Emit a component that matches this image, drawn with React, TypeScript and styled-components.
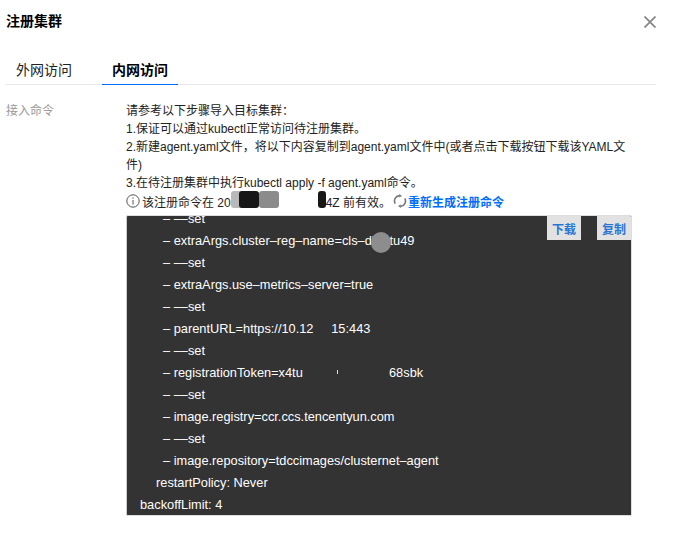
import { createGlobalStyle } from "styled-components";
import styled from "styled-components";

const GlobalStyle = createGlobalStyle`
	html, body {
		margin: 0;
		background: #fff;
		font-family: "Liberation Sans", "Noto Sans CJK SC", sans-serif;
		font-size: 12px;
		color: #222;
	}
`;

const codeLines = [
	{ indent: 36, text: "– ––set" },
	{ indent: 36, text: "– extraArgs.cluster–reg–name=cls–db   tu49" },
	{ indent: 36, text: "– ––set" },
	{ indent: 36, text: "– extraArgs.use–metrics–server=true" },
	{ indent: 36, text: "– ––set" },
	{ indent: 36, text: "– parentURL=https://10.12     15:443" },
	{ indent: 36, text: "– ––set" },
	{ indent: 36, text: "– registrationToken=x4tu" },
	{ indent: 36, text: "– ––set" },
	{ indent: 36, text: "– image.registry=ccr.ccs.tencentyun.com" },
	{ indent: 36, text: "– ––set" },
	{ indent: 36, text: "– image.repository=tdccimages/clusternet–agent" },
	{ indent: 29, text: "restartPolicy: Never" },
	{ indent: 13, text: "backoffLimit: 4" },
];

export default function App() {
	return (
		<Dialog>
			<GlobalStyle />
			<Header>
				<Title>注册集群</Title>
				<CloseIcon viewBox="0 0 12 12">
					<path d="M0.5 0.5 L11.5 11.5 M11.5 0.5 L0.5 11.5" />
				</CloseIcon>
			</Header>
			<Tabs>
				<Tab>外网访问</Tab>
				<Tab $active>内网访问</Tab>
			</Tabs>
			<Row>
				<FieldLabel>接入命令</FieldLabel>
				<Field>
					<Steps>
						<p>请参考以下步骤导入目标集群：</p>
						<p>1.保证可以通过kubectl正常访问待注册集群。</p>
						<p>2.新建agent.yaml文件，将以下内容复制到agent.yaml文件中(或者点击下载按钮下载该YAML文件)</p>
						<p>3.在待注册集群中执行kubectl apply -f agent.yaml命令。</p>
					</Steps>
					<Expiry>
						<InfoIcon viewBox="0 0 14 14">
							<circle cx="7" cy="7" r="6.2" />
							<path d="M7 6 V10.5 M7 3.4 V4.8" />
						</InfoIcon>
						<span>该注册命令在 20</span>
						<Masked>
							<Blob $w={12} $x={0} $c="#b9b9b9" />
							<Blob $w={20} $x={8} $c="#171717" />
							<Blob $w={20} $x={28} $c="#8b8b8b" />
							<Blob $w={8} $x={87} $c="#171717" />
						</Masked>
						<span>4Z 前有效。</span>
						<RefreshIcon viewBox="0 0 14 14">
							<path d="M11.8 4.4 A5.4 5.4 0 0 1 7.6 12.4" />
							<path d="M2.2 9.6 A5.4 5.4 0 0 1 6.4 1.6" />
							<path className="head" d="M6.2 0 L9 2 L6.2 3.6 Z M7.8 14 L5 12 L7.8 10.4 Z" />
						</RefreshIcon>
						<LinkText>重新生成注册命令</LinkText>
					</Expiry>
					<CodeBox>
						<CodeScroll>
							{codeLines.map((line, i) => (
								<CodeLine key={i} $indent={line.indent}>
									{line.text}
								</CodeLine>
							))}
						</CodeScroll>
						<TokenEnd>68sbk</TokenEnd>
						<TokenMark />
						<NameBlob />
						<CodeAction $right={50}>下载</CodeAction>
						<CodeAction $right={0}>复制</CodeAction>
					</CodeBox>
				</Field>
			</Row>
		</Dialog>
	);
}

const Dialog = styled.div`
	width: 679px;
	height: 545px;
	padding: 10px 23px 0 6px;
	box-sizing: border-box;
	overflow: hidden;
	background: #fff;
`;

const Header = styled.div`
	display: flex;
	align-items: center;
	justify-content: space-between;
	height: 20px;
`;

const Title = styled.h2`
	margin: 0;
	font-size: 14px;
	font-weight: 700;
	color: #000;
`;

const CloseIcon = styled.svg`
	width: 12px;
	height: 12px;
	margin-top: 4px;
	fill: none;
	stroke: #888;
	stroke-width: 1.8;
`;

const Tabs = styled.div`
	display: flex;
	height: 25px;
	box-sizing: border-box;
	margin-top: 30px;
	border-bottom: 1px solid #e5e8ef;
`;

const Tab = styled.div<{ $active?: boolean }>`
	width: 76px;
	height: 25px;
	padding-left: 10px;
	box-sizing: border-box;
	font-size: 14px;
	line-height: 21px;
	font-weight: ${(p) => (p.$active ? 700 : 400)};
	color: ${(p) => (p.$active ? "#000" : "#222")};
	border-bottom: 1px solid ${(p) => (p.$active ? "#006eff" : "transparent")};
	&:first-child {
		width: 96px;
	}
`;

const Row = styled.div`
	display: flex;
	margin-top: 17px;
`;

const FieldLabel = styled.div`
	width: 120px;
	flex-shrink: 0;
	line-height: 18px;
	color: #999;
`;

const Field = styled.div`
	width: 506px;
	flex-shrink: 0;
`;

const Steps = styled.div`
	line-height: 18px;
	p {
		margin: 0;
	}
`;

const Expiry = styled.div`
	position: relative;
	display: flex;
	align-items: center;
	height: 18px;
`;

const InfoIcon = styled.svg`
	width: 14px;
	height: 14px;
	margin-right: 2px;
	fill: none;
	stroke: #555;
	stroke-width: 1;
`;

const Masked = styled.span`
	position: relative;
	display: inline-block;
	width: 95px;
	height: 18px;
`;

const Blob = styled.i<{ $w: number; $x: number; $c: string }>`
	position: absolute;
	top: -1px;
	left: ${(p) => p.$x}px;
	width: ${(p) => p.$w}px;
	height: 17px;
	border-radius: 3px;
	background: ${(p) => p.$c};
`;

const RefreshIcon = styled.svg`
	width: 14px;
	height: 14px;
	margin: 0 1px 0 2px;
	fill: none;
	stroke: #777;
	stroke-width: 1.6;
	.head {
		fill: #777;
		stroke: none;
	}
`;

const LinkText = styled.span`
	font-weight: 700;
	color: #006eff;
`;

const CodeBox = styled.div`
	position: relative;
	height: 301px;
	margin-top: 5px;
	overflow: hidden;
	border-radius: 2px;
	border: 1px solid #ddd;
	border-left-color: #ccc;
	box-sizing: border-box;
	background: #333;
`;

const CodeScroll = styled.div`
	margin-top: -8px;
	color: #fff;
	font-size: 12.8px;
	line-height: 22px;
`;

const CodeLine = styled.div<{ $indent: number }>`
	padding-left: ${(p) => p.$indent}px;
	white-space: pre;
`;

const TokenEnd = styled.span`
	position: absolute;
	top: 146px;
	left: 262px;
	color: #fff;
	font-size: 12.8px;
	line-height: 22px;
`;

const TokenMark = styled.span`
	position: absolute;
	top: 154px;
	left: 210px;
	width: 1px;
	height: 4px;
	background: #ddd;
`;

const NameBlob = styled.span`
	position: absolute;
	top: 16px;
	left: 244px;
	width: 20px;
	height: 21px;
	border-radius: 10px;
	background: #8d8d8d;
`;

const CodeAction = styled.button<{ $right: number }>`
	position: absolute;
	top: 0;
	right: ${(p) => p.$right}px;
	width: 34px;
	height: 24px;
	padding: 0;
	border: 0;
	background: #e2e2e2;
	color: #2a76d2;
	font-family: inherit;
	font-size: 12px;
	font-weight: 700;
`;
